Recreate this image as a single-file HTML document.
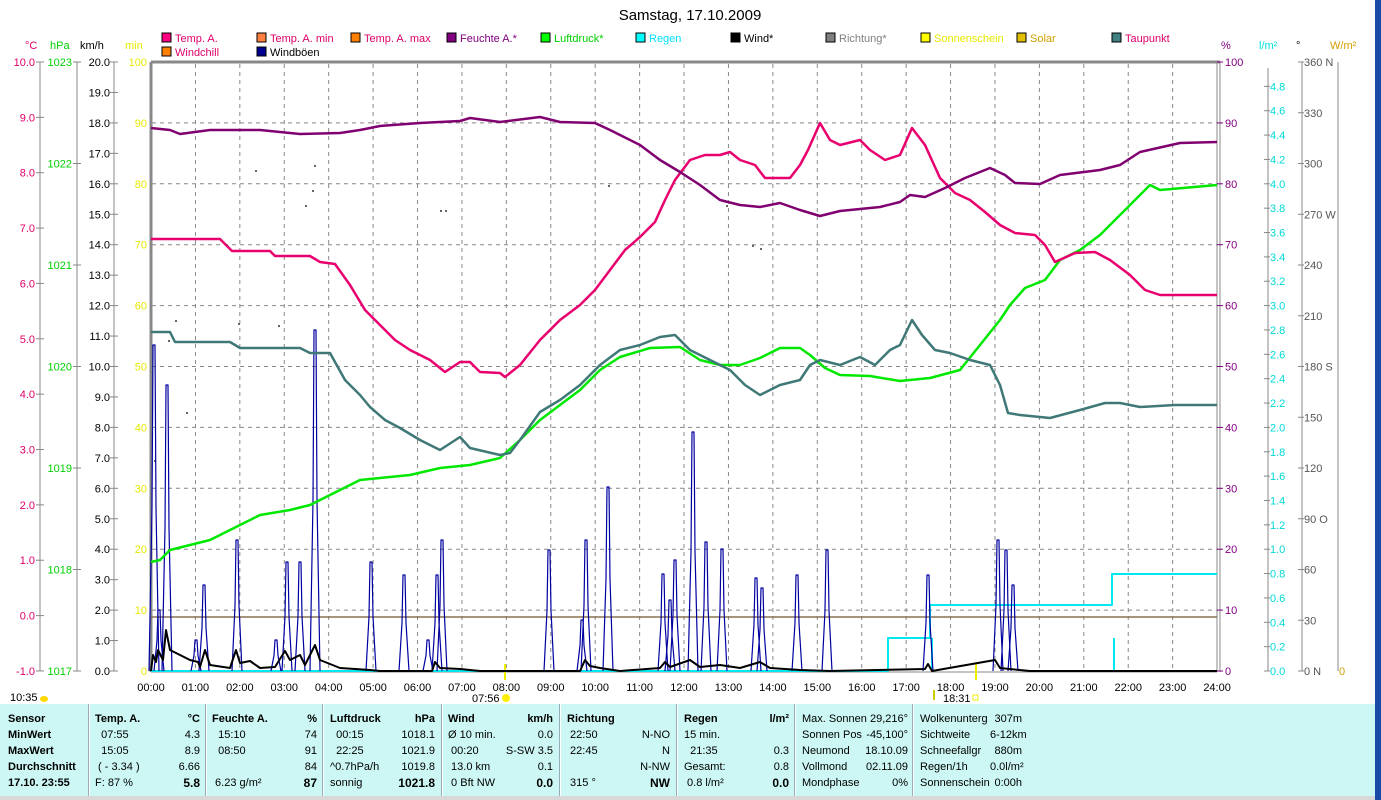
<!DOCTYPE html>
<html><head><meta charset="utf-8">
<style>
html,body{margin:0;padding:0;background:#fff;width:1381px;height:800px;overflow:hidden;font-family:"Liberation Sans",sans-serif;}
svg{position:absolute;left:0;top:0}
text{font-family:"Liberation Sans",sans-serif;font-size:11px}
.tbl{position:absolute;left:0;top:703px;width:1375px;height:92px;background:#ccf7f4;border-top:1px solid #fff}
.c{position:absolute;font-size:11px;line-height:16px;white-space:nowrap;color:#000}
.b{font-weight:bold}
.sep{position:absolute;top:0;width:1px;height:92px;background:#9ab;border-right:1px solid #fff}
</style></head><body>
<svg width="1381" height="800" viewBox="0 0 1381 800">
<rect x="1375" y="0" width="6" height="800" fill="#1a4aa8"/>
<rect x="0" y="795" width="1375" height="5" fill="#d8d8d8"/>
<text x="690" y="20" font-size="15" text-anchor="middle" style="font-size:15px">Samstag, 17.10.2009</text>
<!-- legend -->
<g id="leg"></g>
<!-- grid -->
<g stroke="#888" stroke-width="1" stroke-dasharray="4,4" id="grid"></g>
<line x1="151" y1="62" x2="1220" y2="62" stroke="#888" stroke-width="3"/>
<line x1="151" y1="62" x2="151" y2="672" stroke="#888" stroke-width="3"/>
<line x1="1217" y1="62" x2="1217" y2="672" stroke="#888" stroke-width="1"/>
<line x1="1220" y1="62" x2="1220" y2="672" stroke="#888" stroke-width="1"/>
<line x1="151" y1="617" x2="1217" y2="617" stroke="#8a7050" stroke-width="1.5"/>
<line x1="151" y1="672" x2="1217" y2="672" stroke="#888" stroke-width="1"/>
<g id="axes"></g>
<g id="data"></g>
</svg>
<div class="tbl">
<div class="sep" style="left:88px"></div><div class="sep" style="left:205px"></div><div class="sep" style="left:322px"></div><div class="sep" style="left:441px"></div><div class="sep" style="left:559px"></div><div class="sep" style="left:676px"></div><div class="sep" style="left:794px"></div><div class="sep" style="left:912px"></div>
<div class="c b" style="left:8px;top:7px">Sensor<br>MinWert<br>MaxWert<br>Durchschnitt<br>17.10. 23:55</div>
<div class="c" style="left:95px;top:7px"><b>Temp. A.</b><br>&nbsp;&nbsp;07:55<br>&nbsp;&nbsp;15:05<br>&nbsp;( - 3.34 )<br>F: 87 %</div>
<div class="c" style="left:160px;top:7px;width:40px;text-align:right"><b>°C</b><br>4.3<br>8.9<br>6.66<br><b style="font-size:12px">5.8</b></div>
<div class="c" style="left:212px;top:7px"><b>Feuchte A.</b><br>&nbsp;&nbsp;15:10<br>&nbsp;&nbsp;08:50<br>&nbsp;<br>&nbsp;6.23 g/m²</div>
<div class="c" style="left:277px;top:7px;width:40px;text-align:right"><b>%</b><br>74<br>91<br>84<br><b style="font-size:12px">87</b></div>
<div class="c" style="left:330px;top:7px"><b>Luftdruck</b><br>&nbsp;&nbsp;00:15<br>&nbsp;&nbsp;22:25<br>^0.7hPa/h<br>sonnig</div>
<div class="c" style="left:390px;top:7px;width:45px;text-align:right"><b>hPa</b><br>1018.1<br>1021.9<br>1019.8<br><b style="font-size:12px">1021.8</b></div>
<div class="c" style="left:448px;top:7px"><b>Wind</b><br>Ø 10 min.<br>&nbsp;00:20<br>&nbsp;13.0 km<br>&nbsp;0 Bft NW</div>
<div class="c" style="left:495px;top:7px;width:58px;text-align:right"><b>km/h</b><br>0.0<br>S-SW 3.5<br>0.1<br><b style="font-size:12px">0.0</b></div>
<div class="c" style="left:567px;top:7px"><b>Richtung</b><br>&nbsp;22:50<br>&nbsp;22:45<br>&nbsp;<br>&nbsp;315 °</div>
<div class="c" style="left:620px;top:7px;width:50px;text-align:right">&nbsp;<br>N-NO<br>N<br>N-NW<br><b style="font-size:12px">NW</b></div>
<div class="c" style="left:684px;top:7px"><b>Regen</b><br>15 min.<br>&nbsp;&nbsp;21:35<br>Gesamt:<br>&nbsp;0.8 l/m²</div>
<div class="c" style="left:740px;top:7px;width:49px;text-align:right"><b>l/m²</b><br>&nbsp;<br>0.3<br>0.8<br><b style="font-size:12px">0.0</b></div>
<div class="c" style="left:802px;top:7px">Max. Sonnen<br>Sonnen Pos<br>Neumond<br>Vollmond<br>Mondphase</div>
<div class="c" style="left:850px;top:7px;width:58px;text-align:right">29,216°<br>-45,100°<br>18.10.09<br>02.11.09<br>0%</div>
<div class="c" style="left:920px;top:7px">Wolkenunterg<br>Sichtweite<br>Schneefallgr<br>Regen/1h<br>Sonnenschein</div>
<div class="c" style="left:990px;top:7px;width:32px;text-align:right">307m<br>6-12km<br>880m<br>0.0l/m²<br>0:00h</div>
</div>
<script>
const NS="http://www.w3.org/2000/svg";
function el(p,t,a,txt){const e=document.createElementNS(NS,t);for(const k in a)e.setAttribute(k,a[k]);if(txt!==undefined)e.textContent=txt;p.appendChild(e);return e;}
const X=h=>151+h*44.42;
const g=document.getElementById('grid');
for(let h=1;h<24;h++)el(g,'line',{x1:X(h),y1:64,x2:X(h),y2:671});
for(let k=1;k<10;k++)el(g,'line',{x1:152,y1:62+60.9*k,x2:1217,y2:62+60.9*k});
const ax=document.getElementById('axes');
// units
[[25,'°C','#e0006a'],[50,'hPa','#00d000'],[80,'km/h','#000'],[125,'min','#e8e800'],[1221,'%','#800080'],[1259,'l/m²','#00e0e0'],[1296,'°','#000'],[1330,'W/m²','#d0a000']].forEach(u=>el(ax,'text',{x:u[0],y:49,fill:u[2]},u[1]));
// left axis lines
[[40,'#888'],[77,'#888'],[114,'#888']].forEach(a=>el(ax,'line',{x1:a[0],y1:62,x2:a[0],y2:671,stroke:a[1]}));
for(let v=10;v>=-1;v--){const y=62+(10-v)*55.36;el(ax,'line',{x1:36,y1:y,x2:44,y2:y,stroke:'#888'});el(ax,'text',{x:35,y:y+4,'text-anchor':'end',fill:'#e0006a'},v.toFixed(1));}
for(let i=0;i<=6;i++){const y=62+i*101.5;el(ax,'line',{x1:73,y1:y,x2:81,y2:y,stroke:'#888'});el(ax,'text',{x:72,y:y+4,'text-anchor':'end',fill:'#00d000'},1023-i);}
for(let i=0;i<=20;i++){const y=62+i*30.45;el(ax,'line',{x1:110,y1:y,x2:118,y2:y,stroke:'#888'});el(ax,'text',{x:110,y:y+4,'text-anchor':'end'},(20-i).toFixed(1));}
for(let i=0;i<=10;i++){const y=62+i*60.9;el(ax,'text',{x:147,y:y+4,'text-anchor':'end',fill:'#e8e800'},100-i*10);}
for(let i=0;i<=10;i++){const y=62+i*60.9;el(ax,'line',{x1:1217,y1:y,x2:1223,y2:y,stroke:'#800080'});el(ax,'text',{x:1225,y:y+4,fill:'#800080'},100-i*10);}
el(ax,'line',{x1:1268,y1:68,x2:1268,y2:671,stroke:'#888'});
for(let i=0;i<=24;i++){const v=i*0.2;const y=671-i*24.36;el(ax,'line',{x1:1264,y1:y,x2:1270,y2:y,stroke:'#888'});el(ax,'text',{x:1270,y:y+4,fill:'#00d8d8'},v.toFixed(1));}
el(ax,'line',{x1:1302,y1:62,x2:1302,y2:671,stroke:'#888'});
el(ax,'line',{x1:1338,y1:62,x2:1338,y2:671,stroke:'#888'});
const dl=['360 N','330','300','270 W','240','210','180 S','150','120','90 O','60','30','0 N'];
dl.forEach((t,i)=>{const y=62+i*50.75;el(ax,'line',{x1:1298,y1:y,x2:1304,y2:y,stroke:'#888'});el(ax,'text',{x:1304,y:y+4,fill:'#555'},t);});
el(ax,'text',{x:1339,y:675,fill:'#d0a000'},'0');
for(let h=0;h<=24;h++){el(ax,'text',{x:X(h),y:691,'text-anchor':'middle'},(h<10?'0':'')+h+':00');}
el(ax,'text',{x:10,y:701},'10:35');el(ax,'ellipse',{cx:44,cy:699,rx:4,ry:3,fill:'#ffd800'});
el(ax,'text',{x:472,y:702},'07:56');el(ax,'circle',{cx:506,cy:698,r:4,fill:'#ffee00'});
el(ax,'text',{x:943,y:702},'18:31');el(ax,'rect',{x:973,y:695,width:5,height:5,fill:'none',stroke:'#ee0'});
el(ax,'line',{x1:505,y1:664,x2:505,y2:680,stroke:'#ee0',"stroke-width":2});
el(ax,'line',{x1:976,y1:664,x2:976,y2:680,stroke:'#ee0',"stroke-width":2});
el(ax,'line',{x1:934,y1:690,x2:934,y2:700,stroke:'#cc0',"stroke-width":2});
// legend
const lg=document.getElementById('leg');
[[162,38,'#ff0080','Temp. A.','#e0006a'],[257,38,'#ff8040','Temp. A. min','#e0006a'],[351,38,'#ff8000','Temp. A. max','#e0006a'],[447,38,'#800080','Feuchte A.*','#800080'],[541,38,'#00ff00','Luftdruck*','#00d000'],[636,38,'#00ffff','Regen','#00e0ff'],[731,38,'#000','Wind*','#000'],[826,38,'#808080','Richtung*','#808080'],[921,38,'#ffff00','Sonnenschein','#e8e800'],[1017,38,'#e0c000','Solar','#d0a000'],[1112,38,'#408080','Taupunkt','#e0006a'],[162,52,'#ff8000','Windchill','#e0006a'],[257,52,'#000090','Windböen','#000']].forEach(l=>{el(lg,'rect',{x:l[0],y:l[1]-5,width:9,height:9,fill:l[2],stroke:'#000'});el(lg,'text',{x:l[0]+13,y:l[1]+4,fill:l[4]},l[3]);});
// data
const d=document.getElementById('data');
function pl(pts,c,w){el(d,'polyline',{points:pts,fill:'none',stroke:c,'stroke-width':w,'stroke-linejoin':'round'});}
// gray direction dots
[[255,170],[305,205],[312,190],[314,165],[440,210],[445,210],[608,185],[726,205],[752,245],[760,248],[238,323],[278,325],[186,412],[154,460],[168,340],[175,320]].forEach(p=>el(d,'rect',{x:p[0],y:p[1],width:2,height:2,fill:'#666'}));
// rain
pl("151,671 888,671 888,638 930,638 930,605 1112,605 1112,574 1217,574","#00e8f0",2);
el(d,'line',{x1:1114,y1:638,x2:1114,y2:671,stroke:'#00e8f0','stroke-width':2});
el(d,'line',{x1:932,y1:638,x2:932,y2:671,stroke:'#00e8f0','stroke-width':2});
// gusts
const sp=[[154,345],[167,385],[204,585],[237,540],[287,562],[300,562],[315,330],[371,562],[404,575],[437,575],[442,540],[549,550],[586,540],[608,487],[663,574],[675,560],[693,432],[706,542],[722,549],[756,578],[762,588],[797,575],[827,550],[928,575],[998,540],[1006,550],[1013,585],[159,610],[196,640],[276,640],[428,640],[582,620],[670,600]];
sp.forEach(s=>pl(`${s[0]-5},671 ${s[0]-2},${(s[1]+671)/2} ${s[0]-1},${s[1]} ${s[0]+1},${s[1]} ${s[0]+2},${(s[1]+671)/2} ${s[0]+5},671`,"#0000a0",1.2));
// wind
pl("151,671 153,655 156,662 158,650 163,660 166,630 170,650 180,655 190,660 198,662 200,667 205,650 210,665 230,668 236,650 240,663 250,661 260,668 275,667 285,651 290,660 300,655 305,665 315,645 320,660 340,668 370,670 380,671 432,671 435,662 440,668 460,669 480,671 580,671 585,660 590,666 600,668 620,671 660,668 665,662 670,667 690,660 700,667 720,665 740,668 760,662 770,668 800,670 830,671 925,669 928,664 932,671 995,660 1000,668 1030,671 1217,671","#000",2);
// pressure
pl("151,562 160,560 170,550 190,545 210,540 230,530 260,515 290,510 310,505 320,500 340,490 360,480 380,478 410,475 440,468 470,465 500,458 520,440 540,420 560,405 580,390 600,370 620,357 650,348 680,347 700,360 720,365 740,365 760,358 780,348 800,348 810,355 825,368 840,375 870,376 900,381 930,378 960,370 980,345 1000,320 1010,305 1025,288 1045,280 1060,260 1080,250 1100,235 1120,215 1135,200 1150,185 1160,190 1217,185","#00e800",2.5);
// dewpoint
pl("151,332 170,332 175,342 230,342 240,348 300,348 310,353 330,353 345,380 360,395 370,407 385,420 400,428 420,440 440,450 460,437 470,448 500,455 510,453 520,440 540,412 560,400 580,385 600,365 620,350 640,345 660,337 675,335 690,350 710,360 730,370 745,385 760,395 780,385 800,380 810,365 820,360 840,365 860,357 875,365 890,350 900,345 912,320 922,335 935,350 950,353 970,360 990,365 1000,385 1008,413 1020,415 1050,418 1080,410 1105,403 1120,403 1140,407 1175,405 1217,405","#407878",2.5);
// temp
pl("151,239 220,239 232,251 270,251 275,256 310,256 320,262 335,264 350,285 365,310 380,325 395,340 410,350 430,360 445,372 460,362 470,362 480,372 500,373 505,377 520,365 540,340 560,320 580,305 595,290 610,270 625,250 640,237 655,222 665,200 675,180 690,160 705,155 720,155 730,152 740,160 755,165 765,178 790,178 800,165 808,150 820,123 830,140 840,145 860,140 870,150 885,160 900,155 912,128 925,145 940,178 955,193 970,200 985,212 1000,225 1015,233 1035,235 1045,245 1055,262 1075,253 1095,252 1110,260 1130,275 1145,290 1160,295 1217,295","#e8006e",2.5);
// humidity
pl("151,128 170,130 180,134 210,130 260,130 300,134 340,133 360,130 380,126 420,123 460,121 470,118 500,122 540,117 560,122 595,123 610,130 640,145 660,160 680,172 700,185 720,200 740,205 760,207 780,203 800,210 820,216 840,211 880,207 900,202 910,195 925,197 945,188 965,178 990,168 1005,175 1015,183 1040,184 1060,175 1100,170 1120,165 1140,152 1180,143 1217,142","#800070",2.5);
</script>
</body></html>
